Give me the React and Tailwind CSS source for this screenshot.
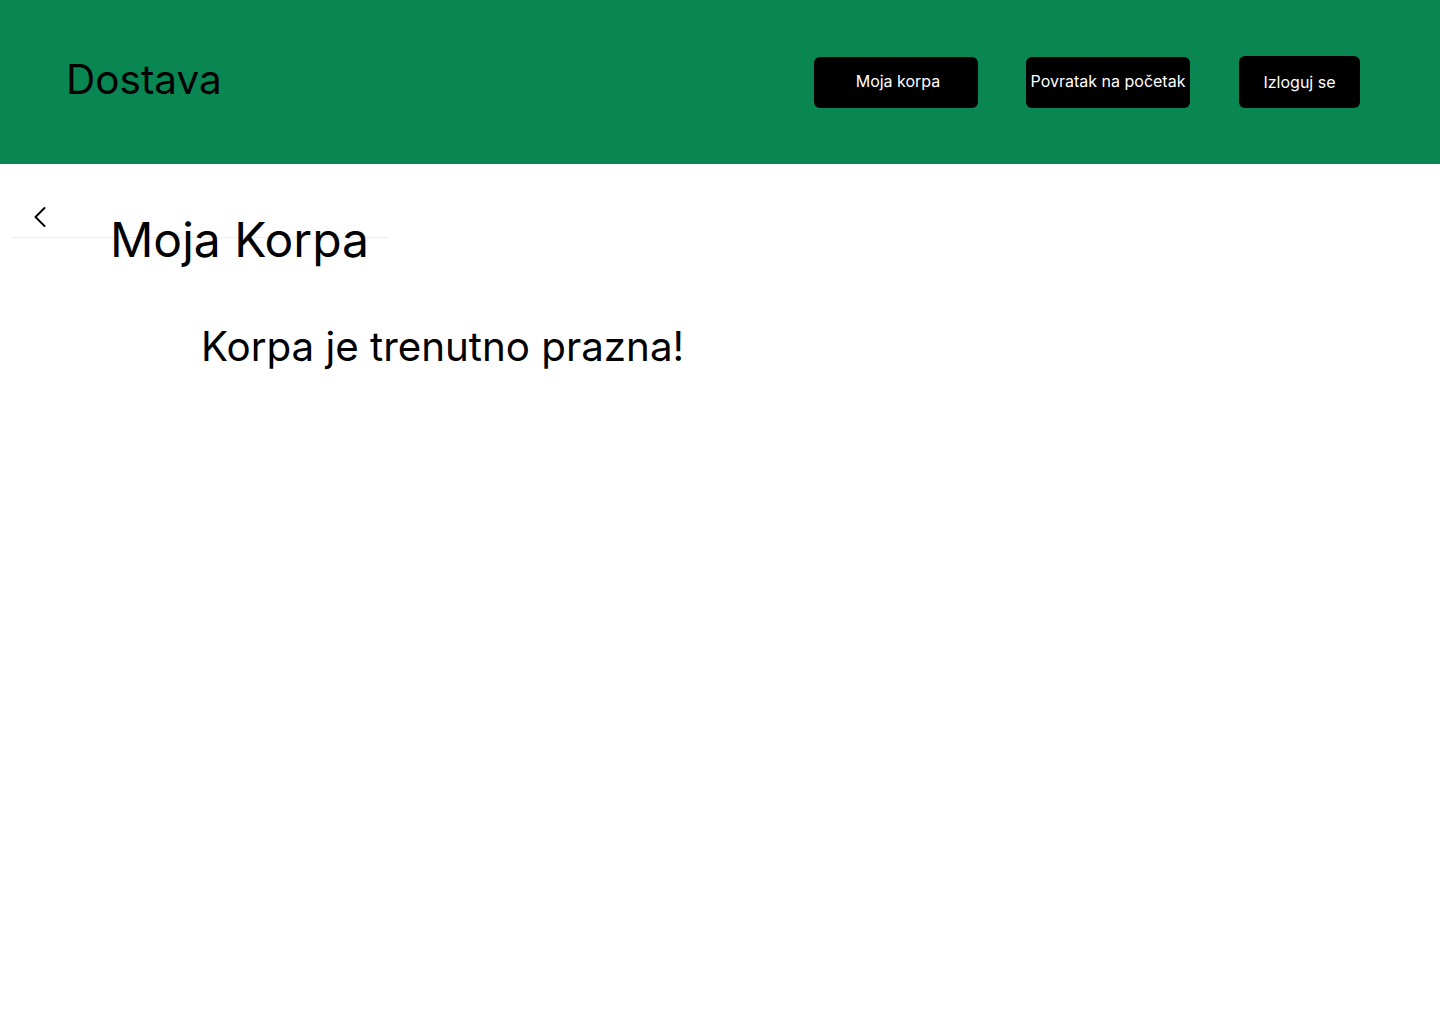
import React from 'react';

const NavButton = ({ children, className = '' }) => (
  <button className={`bg-black text-white text-[16px] rounded-md flex items-center justify-center ${className}`}>
    {children}
  </button>
);

export default function App() {
  return (
    <div className="min-h-screen bg-white text-black" style={{ fontFamily: 'Inter, "Noto Sans", sans-serif' }}>
      {/* Header */}
      <header className="bg-[#0a8653] h-[164px] flex items-center justify-between pl-[66px] pr-[80px]">
        <h1 className="text-[40.5px] leading-none -mt-[4px]">Dostava</h1>
        <nav className="flex items-center">
          <NavButton className="w-[164px] h-[51px] mt-[1px] pl-[4px] pb-[3px]">Moja korpa</NavButton>
          <NavButton className="w-[164px] h-[51px] ml-[48px] mt-[1px] pb-[3px]">Povratak na početak</NavButton>
          <NavButton className="w-[121px] h-[52px] ml-[49px]">Izloguj se</NavButton>
        </nav>
      </header>

      {/* Cart */}
      <main>
        <div className="relative w-[376px] ml-[12px] border-b border-[#eeeeee] h-[74px]">
          <button className="absolute left-[10px] top-[35px] text-black">
            <svg width="36" height="36" viewBox="0 0 24 24" fill="none" stroke="currentColor" strokeWidth="1.3" strokeLinecap="round" strokeLinejoin="round">
              <path d="M15 18l-6-6 6-6" />
            </svg>
          </button>
        </div>
        <h2 className="relative text-[48px] leading-none ml-[110px] -mt-[22px]">Moja Korpa</h2>
        <p className="relative text-[40.3px] leading-none ml-[201px] mt-[63px]">Korpa je trenutno prazna!</p>
      </main>
    </div>
  );
}
